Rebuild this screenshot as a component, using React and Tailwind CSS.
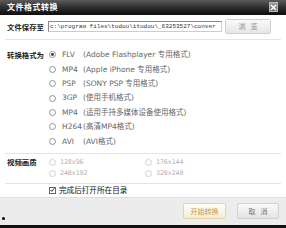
import React from "react";

const cjk = { fontFamily: '"Noto Sans CJK SC", "Noto Sans", sans-serif' };
const latin = { fontFamily: '"DejaVu Sans", "Noto Sans CJK SC", sans-serif' };

function Radio({ checked, disabled }) {
  return (
    <svg width="7" height="7" viewBox="0 0 7 7" className="shrink-0">
      <circle cx="3.5" cy="3.5" r="3" fill="#fff" stroke={disabled ? "#c8c8c8" : "#8a8a8a"} strokeWidth="0.9" />
      {checked && <circle cx="3.5" cy="3.5" r="1.4" fill={disabled ? "#aaa" : "#333"} />}
    </svg>
  );
}

const formats = [
  ["FLV", "(Adobe Flashplayer 专用格式)", true],
  ["MP4", "(Apple iPhone 专用格式)"],
  ["PSP", "(SONY PSP 专用格式)"],
  ["3GP", "(使用手机格式)"],
  ["MP4", "(适用手持多媒体设备使用格式)"],
  ["H264", "(高清MP4格式)"],
  ["AVI", "(AVI格式)"],
];

export default function App() {
  return (
    <div className="w-[286px] h-[228px] flex flex-col bg-white overflow-hidden" style={cjk}>
      {/* title bar */}
      <div className="h-[15px] flex items-center justify-between bg-gradient-to-b from-[#5c5c5c] via-[#2e2e2e] to-[#0e0e0e]">
        <span className="pl-[7px] text-[8px] leading-none font-bold text-white tracking-[0.5px]">文件格式转换</span>
        <div className="mr-[8px] w-[9px] h-[10px] bg-gradient-to-b from-[#9a9a9a] to-[#6a6a6a] border border-[#bbb] flex items-center justify-center">
          <svg width="7" height="7" viewBox="0 0 7 7">
            <path d="M1 1 L6 6 M6 1 L1 6" stroke="#fff" strokeWidth="1.5" />
          </svg>
        </div>
      </div>

      {/* body */}
      <div className="flex-1 flex flex-col px-[5px]">
        {/* save path */}
        <div className="flex items-center h-[25px] border-b border-[#e4e4e4]">
          <span className="w-[43px] pl-[2px] text-[7.4px] font-semibold text-[#222] leading-none">文件保存至</span>
          <div className="w-[174px] h-[11px] border border-[#8a8a8a] border-r-[#ccc] border-b-[#ccc] flex items-center overflow-hidden">
            <span className="text-[6px] leading-none text-[#333] whitespace-nowrap pl-[1px]" style={{ fontFamily: '"Liberation Mono", monospace' }}>
              c:\program files\tudou\itudou\_63253527\conver
            </span>
          </div>
          <div className="ml-[3px] w-[46px] h-[15px] border border-[#d0d0d0] rounded-[2px] bg-gradient-to-b from-[#fafafa] to-[#e6e6e6] flex items-center justify-center">
            <span className="text-[7px] text-[#888] leading-none tracking-[5px] pl-[5px]">浏览</span>
          </div>
        </div>

        {/* formats */}
        <div className="flex pt-[8px] pb-[4px] border-b border-[#e4e4e4]">
          <span className="w-[44px] pl-[2px] h-[14.4px] flex items-center text-[7.4px] font-semibold text-[#222] leading-none">转换格式为</span>
          <div className="flex flex-col">
            {formats.map(([f, d, c], i) => (
              <div key={i} className="h-[14.4px] flex items-center text-[7.5px] text-[#666] leading-none">
                <Radio checked={c} />
                <span className="w-[27px] pl-[6px]" style={latin}>{f}</span>
                <span style={latin}>{d}</span>
              </div>
            ))}
          </div>
        </div>

        {/* quality */}
        <div className="flex pt-[3px] pb-[4px] border-b border-[#e4e4e4]">
          <span className="w-[44px] pl-[2px] h-[11px] flex items-center text-[7.4px] font-semibold text-[#222] leading-none">视频画质</span>
          <div className="grid grid-cols-[96px_100px]">
            {[
              ["128x96", false],
              ["176x144", false],
              ["240x192", false],
              ["320x240", false],
            ].map(([t, c]) => (
              <div key={t} className="h-[11px] flex items-center gap-[4px] text-[6.5px] text-[#b0b0b0] leading-none" style={{ fontFamily: '"DejaVu Sans Mono", monospace' }}>
                <Radio checked={c} disabled />
                <span>{t}</span>
              </div>
            ))}
          </div>
        </div>

        {/* checkbox */}
        <div className="flex items-center h-[13px] pl-[44px]">
          <div className="w-[7px] h-[7px] border border-[#666] bg-white flex items-center justify-center">
            <svg width="6" height="6" viewBox="0 0 6 6">
              <path d="M0.8 3 L2.3 4.6 L5.3 0.8" stroke="#111" strokeWidth="1" fill="none" />
            </svg>
          </div>
          <span className="pl-[3px] text-[7.6px] text-[#111] leading-none">完成后打开所在目录</span>
        </div>
      </div>

      {/* footer */}
      <div className="h-[29px] bg-[#ececec] border-t border-[#dedede] flex items-center justify-end gap-[11px] pr-[7px] relative">
        <div className="absolute left-[2px] bottom-[5px] w-[3px] h-[3px] rounded-full bg-black" />
        <div className="w-[43px] h-[16px] rounded-[2px] border border-[#e6d3a8] bg-gradient-to-b from-[#fffdf6] to-[#f4ecd8] flex items-center justify-center">
          <span className="text-[7px] text-[#c79a4a] leading-none">开始转换</span>
        </div>
        <div className="w-[42px] h-[16px] rounded-[2px] border border-[#d0d0d0] bg-gradient-to-b from-[#fafafa] to-[#e4e4e4] flex items-center justify-center">
          <span className="text-[7px] text-[#777] leading-none tracking-[5px] pl-[5px]">取消</span>
        </div>
      </div>
      <div className="h-[3px] bg-[#111]" />
    </div>
  );
}
